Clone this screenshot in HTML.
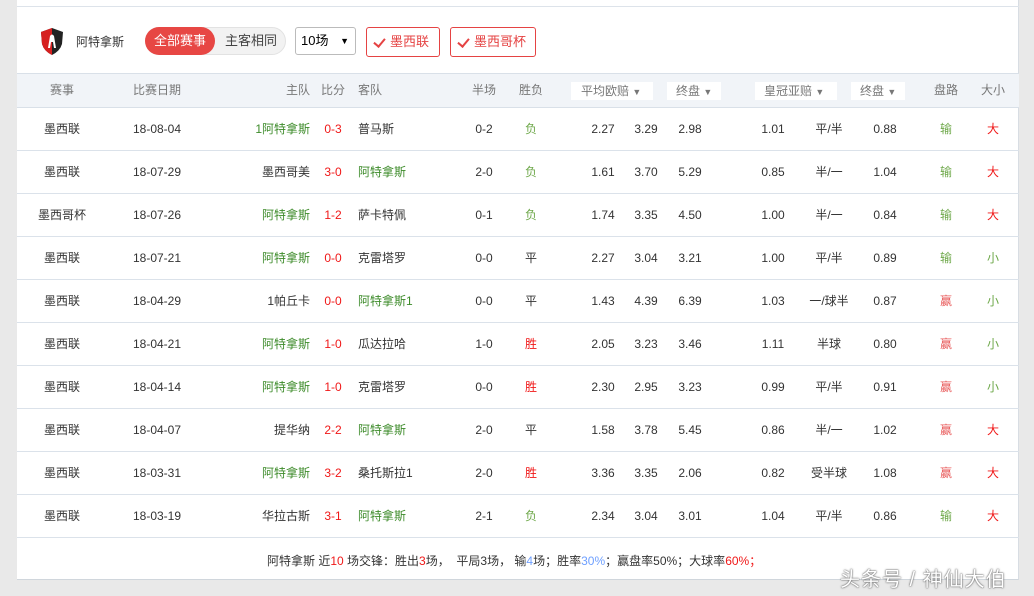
<!DOCTYPE html>
<html><head><meta charset="utf-8"><style>
*{margin:0;padding:0;box-sizing:border-box}
body{width:1034px;height:596px;background:#e9e9e9;font-family:"Liberation Sans","Noto Sans CJK SC",sans-serif;font-size:12px;color:#333;position:relative;overflow:hidden}
#card{position:absolute;left:17px;top:0;width:1002px;height:580px;background:#fff;border-right:1px solid #d8dde3;border-bottom:1px solid #d0d6dc}
.topline{position:absolute;left:0;top:6px;width:1002px;height:1px;background:#dde3ea}
.a{position:absolute;white-space:nowrap}
.hdr{position:absolute;left:0;top:73px;width:1002px;height:35px;background:#f1f4f8;border-top:1px solid #d9e0e8;border-bottom:1px solid #d9e0e8;color:#777}
.hdr div{line-height:33px}
.row{position:absolute;left:0;width:1002px;height:43px;border-bottom:1px solid #dbe2ea}
.c,.r,.l{position:absolute;top:0;height:42px;line-height:42px;white-space:nowrap}
.c{transform:translateX(-50%)}
.r{transform:translateX(-100%)}
.g{color:#3d8b2a}.red{color:#f01818}.lg{color:#6ea84a}.pk{color:#e85a5a}.bl{color:#6fa0ff}
.sel{position:absolute;background:#fff;height:18px;top:8px}
.hdr .sel{line-height:18px}
.btn{position:absolute;top:27px;height:30px;border:1px solid #e54343;border-radius:3px;color:#e54343;font-size:13px;line-height:28px;padding-left:23px}
.btn:before{content:"";position:absolute;left:9px;top:8px;width:5px;height:9px;border-right:2px solid #e54343;border-bottom:2px solid #e54343;transform:rotate(40deg)}
</style></head><body>
<div id="card">
<div class="topline"></div>
<svg class="a" style="left:24px;top:28px" width="22" height="27" viewBox="0 0 22 27"><path d="M11 0 L22 4 L21 16 Q19 23 11 27 Q3 23 1 16 L0 4 Z" fill="#222"/><path d="M11 0 L0 4 L1 16 Q3 23 11 27 Z" fill="#d62020"/><path d="M7 20 L9 8 Q11 5 13 8 L15 20 L13 20 L12 14 L10 14 L9 20 Z" fill="#fff"/></svg>
<div class="a" style="left:59px;top:33px;font-size:12px;color:#333">阿特拿斯</div>
<div class="a" style="left:128px;top:27px;width:141px;height:28px;border-radius:14px;background:#f2f2f2;border:1px solid #e2e2e2"></div>
<div class="a" style="left:128px;top:27px;width:70px;height:28px;border-radius:14px;background:#e74744;color:#fff;font-size:13px;line-height:28px;text-align:center">全部赛事</div>
<div class="a" style="left:208px;top:27px;font-size:13px;line-height:28px;color:#444">主客相同</div>
<div class="a" style="left:278px;top:27px;width:61px;height:28px;border:1px solid #bbb;border-radius:3px;font-size:13px;line-height:26px;padding-left:5px;color:#000">10场<span style="position:absolute;right:6px;font-size:9px">▼</span></div>
<div class="btn" style="left:349px;width:74px">墨西联</div>
<div class="btn" style="left:433px;width:86px">墨西哥杯</div>
<div class="hdr">
<div class="c" style="left:45px">赛事</div>
<div class="c" style="left:140px">比赛日期</div>
<div class="r" style="left:293px">主队</div>
<div class="c" style="left:316px">比分</div>
<div class="l" style="left:341px">客队</div>
<div class="c" style="left:467px">半场</div>
<div class="c" style="left:514px">胜负</div>
<div class="sel" style="left:554px;width:82px"></div><div class="a" style="left:564px;top:8px;line-height:18px">平均欧赔 <span style="font-size:9px">▼</span></div>
<div class="sel" style="left:650px;width:54px"></div><div class="a" style="left:659px;top:8px;line-height:18px">终盘 <span style="font-size:9px">▼</span></div>
<div class="sel" style="left:738px;width:82px"></div><div class="a" style="left:747px;top:8px;line-height:18px">皇冠亚赔 <span style="font-size:9px">▼</span></div>
<div class="sel" style="left:834px;width:54px"></div><div class="a" style="left:843px;top:8px;line-height:18px">终盘 <span style="font-size:9px">▼</span></div>
<div class="c" style="left:929px">盘路</div>
<div class="c" style="left:976px">大小</div>
</div>
<div id="rows"></div>
<div class="a" style="left:250px;top:552px;color:#333">阿特拿斯 近<span class="red">10</span> 场交锋：胜出<span class="red">3</span>场，&nbsp; 平局3场，&nbsp;输<span class="bl">4</span>场；胜率<span class="bl">30%</span>；赢盘率50%；大球率<span class="red">60%；</span></div>
</div>
<div class="a" style="left:840px;top:563px;font-size:20px;letter-spacing:1px;color:#fff;text-shadow:0 0 2px #666,0 0 1px #444">头条号 / 神仙大伯</div>
<script>
var d=[
["墨西联","18-08-04","1阿特拿斯","0-3","普马斯","0-2","负","2.27","3.29","2.98","1.01","平/半","0.88","输","大"],
["墨西联","18-07-29","墨西哥美","3-0","阿特拿斯","2-0","负","1.61","3.70","5.29","0.85","半/一","1.04","输","大"],
["墨西哥杯","18-07-26","阿特拿斯","1-2","萨卡特佩","0-1","负","1.74","3.35","4.50","1.00","半/一","0.84","输","大"],
["墨西联","18-07-21","阿特拿斯","0-0","克雷塔罗","0-0","平","2.27","3.04","3.21","1.00","平/半","0.89","输","小"],
["墨西联","18-04-29","1帕丘卡","0-0","阿特拿斯1","0-0","平","1.43","4.39","6.39","1.03","一/球半","0.87","赢","小"],
["墨西联","18-04-21","阿特拿斯","1-0","瓜达拉哈","1-0","胜","2.05","3.23","3.46","1.11","半球","0.80","赢","小"],
["墨西联","18-04-14","阿特拿斯","1-0","克雷塔罗","0-0","胜","2.30","2.95","3.23","0.99","平/半","0.91","赢","小"],
["墨西联","18-04-07","提华纳","2-2","阿特拿斯","2-0","平","1.58","3.78","5.45","0.86","半/一","1.02","赢","大"],
["墨西联","18-03-31","阿特拿斯","3-2","桑托斯拉1","2-0","胜","3.36","3.35","2.06","0.82","受半球","1.08","赢","大"],
["墨西联","18-03-19","华拉古斯","3-1","阿特拿斯","2-1","负","2.34","3.04","3.01","1.04","平/半","0.86","输","大"]];
var h="";
d.forEach(function(r,i){
var t=108+i*43;
function tc(s){return s.indexOf("阿特拿斯")>=0?' class="g"':'';}
var wl=r[6]=="负"?"lg":(r[6]=="胜"?"red":"");
h+='<div class="row" style="top:'+t+'px">'+
'<div class="c" style="left:45px">'+r[0]+'</div>'+
'<div class="c" style="left:140px">'+r[1]+'</div>'+
'<div class="r" style="left:293px"><span'+tc(r[2])+'>'+r[2]+'</span></div>'+
'<div class="c red" style="left:316px">'+r[3]+'</div>'+
'<div class="l" style="left:341px"><span'+tc(r[4])+'>'+r[4]+'</span></div>'+
'<div class="c" style="left:467px">'+r[5]+'</div>'+
'<div class="c '+wl+'" style="left:514px">'+r[6]+'</div>'+
'<div class="c" style="left:586px">'+r[7]+'</div>'+
'<div class="c" style="left:629px">'+r[8]+'</div>'+
'<div class="c" style="left:673px">'+r[9]+'</div>'+
'<div class="c" style="left:756px">'+r[10]+'</div>'+
'<div class="c" style="left:812px">'+r[11]+'</div>'+
'<div class="c" style="left:868px">'+r[12]+'</div>'+
'<div class="c '+(r[13]=="输"?"lg":"pk")+'" style="left:929px">'+r[13]+'</div>'+
'<div class="c '+(r[14]=="大"?"red":"lg")+'" style="left:976px">'+r[14]+'</div></div>';
});
document.getElementById("rows").innerHTML=h;
</script>
</body></html>
